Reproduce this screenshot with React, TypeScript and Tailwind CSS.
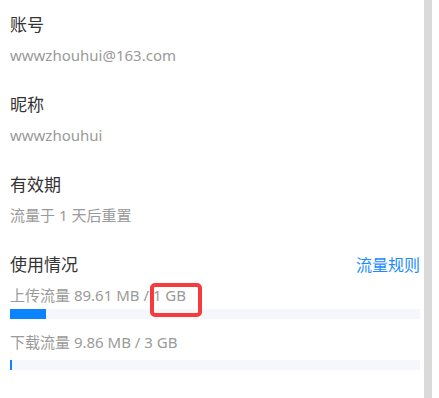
import React from 'react';

const font = { fontFamily: '"Noto Sans", "Noto Sans CJK SC", sans-serif' };

interface InfoRowProps {
  title: string;
  value: string;
}

function InfoRow({ title, value }: InfoRowProps) {
  return (
    <div className="mb-[28px]">
      <div className="text-[17px] leading-[24px] text-[#333]">{title}</div>
      <div className="mt-[8px] text-[15px] leading-[20px] text-[#9a9a9a]">{value}</div>
    </div>
  );
}

function UsageBar({ label, percent, wide }: { label: string; percent: number; wide?: boolean }) {
  return (
    <div>
      <div className="text-[15px] leading-[20px] text-[#9a9a9a]">{label}</div>
      <div className={wide ? 'mt-[8px] h-[10px] w-full bg-[#f6f7fc]' : 'mt-[4px] h-[10px] w-full bg-[#f6f7fc]'}>
        <div className="h-full bg-[#0a84ff]" style={{ width: `${percent}%` }} />
      </div>
    </div>
  );
}

export default function App() {
  return (
    <div className="flex h-[398px] w-[439px] bg-white" style={font}>
      <div className="relative w-[424px] pl-[10px] pr-[4px] pt-[13px]">
        <InfoRow title="账号" value="wwwzhouhui@163.com" />
        <InfoRow title="昵称" value="wwwzhouhui" />
        <InfoRow title="有效期" value="流量于 1 天后重置" />

        <div className="flex items-center justify-between">
          <span className="text-[17px] leading-[24px] text-[#333]">使用情况</span>
          <span className="text-[16px] leading-[24px] text-[#1a8cff]">流量规则</span>
        </div>
        <div className="mt-[8px]">
          <UsageBar label="上传流量 89.61 MB / 1 GB" percent={8.75} />
        </div>
        <div className="mt-[13px]">
          <UsageBar label="下载流量 9.86 MB / 3 GB" percent={0.4} wide />
        </div>

        {/* highlight annotation */}
        <div className="absolute left-[150px] top-[283px] h-[34px] w-[52px] rounded-[5px] border-[4px] border-[#f53b3b]" />
      </div>
      <div className="w-[8px] bg-[#dadada]" />
    </div>
  );
}
